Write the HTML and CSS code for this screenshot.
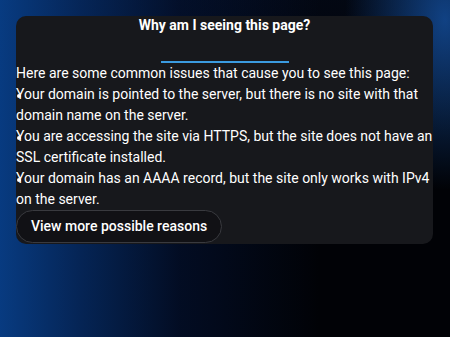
FILE: index.html
```html
<!DOCTYPE html>
<html lang="en">
<head>
<meta charset="utf-8">
<title>Why am I seeing this page?</title>
<link rel="stylesheet" href="styles.css">
</head>
<body>
  <main class="card">
    <h1 class="title">Why am I seeing this page?</h1>
    <div class="rule"></div>
    <p class="intro">Here are some common issues that cause you to see this page:</p>
    <ul class="issues">
      <li>Your domain is pointed to the server, but there is no site with that domain name on the server.</li>
      <li>You are accessing the site via HTTPS, but the site does not have an SSL certificate installed.</li>
      <li>Your domain has an AAAA record, but the site only works with IPv4 on the server.</li>
    </ul>
    <button class="more" type="button">View more possible reasons</button>
  </main>
</body>
</html>
```

FILE: styles.css
```css
html, body {
  margin: 0;
  height: 100%;
}

body {
  width: 450px;
  height: 337px;
  overflow: hidden;
  font-family: Roboto, "Liberation Sans", sans-serif;
  color: #ffffff;
  background:
    radial-gradient(ellipse 100px 170px at 445px 20px, rgba(20, 80, 160, 0.8), rgba(20, 80, 160, 0) 100%),
    linear-gradient(90deg, rgba(8, 62, 135, 0.95) 0px, rgba(6, 45, 105, 0.8) 80px, rgba(4, 25, 70, 0.45) 180px, rgba(0, 0, 0, 0) 320px),
    linear-gradient(180deg, rgba(3, 8, 20, 0.9) 0px, rgba(3, 8, 20, 0) 140px),
    #010206;
  padding-top: 16px;
  box-sizing: border-box;
}

.card {
  margin: 0 17px 0 16px;
  padding-bottom: 1px;
  background: #17181c;
  border-radius: 10px;
  display: flex;
  flex-direction: column;
  align-items: flex-start;
}

.title {
  align-self: stretch;
  margin: 0;
  text-align: center;
  font-size: 14px;
  font-weight: 700;
  line-height: 18px;
}

.rule {
  align-self: center;
  width: 128px;
  height: 2px;
  background: #3b9be0;
  margin-top: 27px;
}

.intro {
  margin: 0;
  font-size: 14px;
  line-height: 21px;
}

.issues {
  list-style: none;
  margin: 0;
  padding: 0;
  font-size: 14px;
  line-height: 21px;
}

.issues li {
  position: relative;
}

.issues li::before {
  content: "";
  position: absolute;
  left: 1px;
  top: 10px;
  width: 4px;
  height: 4px;
  border-radius: 50%;
  background: #ffffff;
}

.more {
  margin-top: 0;
  font-family: Roboto, "Liberation Sans", sans-serif;
  font-size: 14px;
  font-weight: 500;
  color: #ffffff;
  background: #111115;
  border: 1px solid #393a3f;
  border-radius: 17px;
  height: 33px;
  padding: 0 14px;
  line-height: 31px;
}
```
